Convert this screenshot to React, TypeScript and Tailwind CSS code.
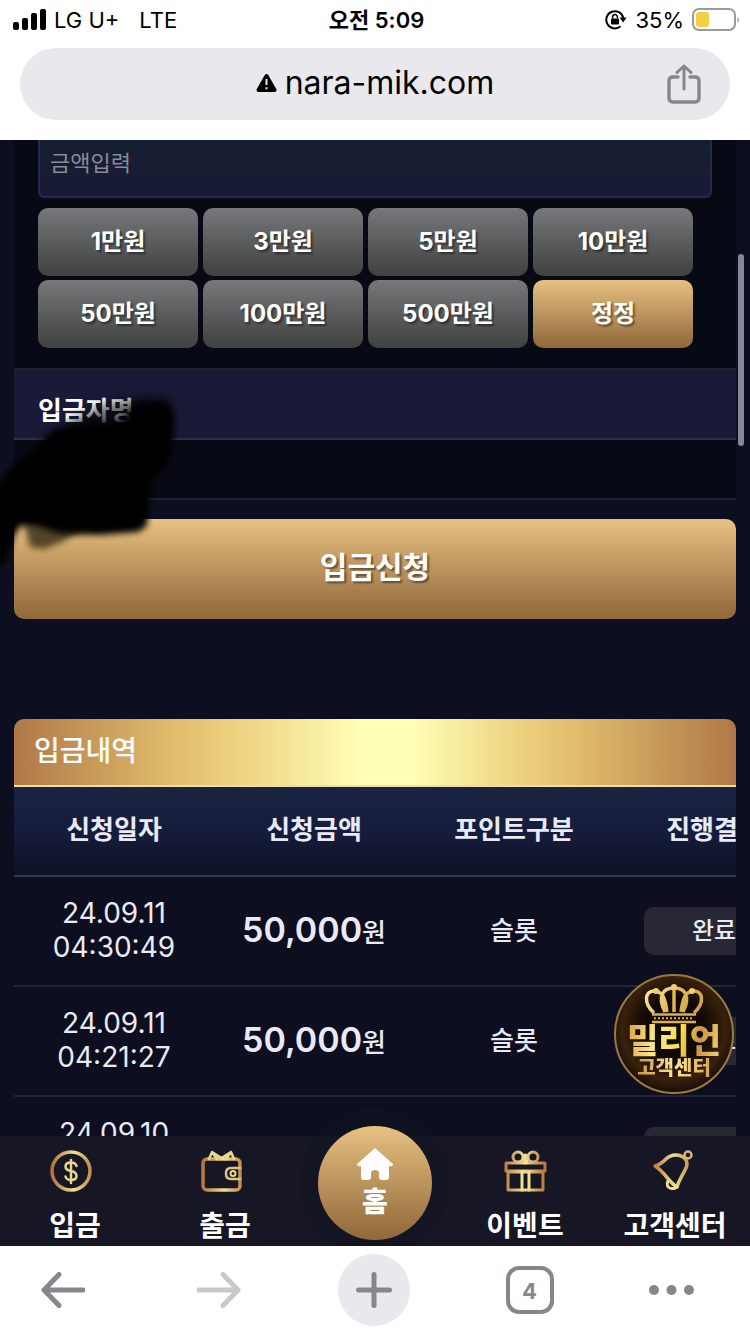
import { useState } from 'react';
import clsx from 'clsx';

interface Deposit {
  date: string;
  time: string;
  amount: string;
  kind: string;
  status: string;
}

const AMOUNTS = [1, 3, 5, 10, 50, 100, 500];

const DEPOSITS: Deposit[] = [
  { date: '24.09.11', time: '04:30:49', amount: '50,000', kind: '슬롯', status: '완료' },
  { date: '24.09.11', time: '04:21:27', amount: '50,000', kind: '슬롯', status: '완료' },
  { date: '24.09.10', time: '23:52:10', amount: '50,000', kind: '슬롯', status: '완료' },
];

const GOLD = 'bg-linear-to-b from-[#e8c182] to-[#90683a]';
const TEXT_SHADOW = '[text-shadow:2px_2px_2px_rgba(0,0,0,0.45)]';

function StatusBar() {
  return (
    <div className="grid grid-cols-[1fr_auto_1fr] items-center h-10 pl-[13px] pr-2.5 text-[22px] leading-10">
      <div className="flex items-center gap-2">
        <svg className="w-[33px] h-[22px]" viewBox="0 0 33 22" aria-hidden="true">
          <rect x="0" y="13" width="6" height="8" rx="2" />
          <rect x="9" y="9" width="6" height="12" rx="2" />
          <rect x="18" y="4" width="6" height="17" rx="2" />
          <rect x="27" y="0" width="6" height="21" rx="2" />
        </svg>
        <span>LG U+</span>
        <span className="ml-3">LTE</span>
      </div>
      <span className="font-semibold">오전 5:09</span>
      <div className="flex items-center justify-end gap-2">
        <svg className="w-[22px] h-[22px]" viewBox="0 0 22 22" aria-hidden="true">
          <path d="M15.5 17.3A8.6 8.6 0 1 1 18.3 9" fill="none" stroke="black" strokeWidth="2" />
          <path d="M14.6 8.6h7l-3.5 4.8z" />
          <rect x="6" y="9.4" width="8" height="6" rx="1" />
          <path d="M7.6 9.6V8a2.4 2.4 0 0 1 4.8 0v1.6" fill="none" stroke="black" strokeWidth="1.5" />
        </svg>
        <span>35%</span>
        <svg className="w-12 h-6" viewBox="0 0 48 24" aria-hidden="true">
          <rect x="1" y="1" width="42" height="21" rx="6" fill="none" stroke="#9a9a9a" strokeWidth="2" />
          <rect x="4" y="4" width="13" height="15" rx="3" fill="#f5ce45" />
          <path d="M45.5 8.5q3 3 0 6.500z" fill="#9a9a9a" />
        </svg>
      </div>
    </div>
  );
}

function AddressBar() {
  return (
    <div className="grid grid-cols-[1fr_auto_1fr] items-center h-[72px] mx-5 mt-2 mb-5 rounded-full bg-[#e8e8ed]">
      <button className="col-start-2 flex items-center gap-2 pb-0.5 text-[32px]">
        <svg className="w-[21px] h-5" viewBox="0 0 21 20" aria-hidden="true">
          <path d="M10.500 3 18.500 17h-16z" stroke="black" strokeWidth="4" strokeLinejoin="round" />
          <path d="M10.500 6v6M10.500 14.300v2" stroke="#e8e8ed" strokeWidth="2" />
        </svg>
        nara-mik.com
      </button>
      <button className="justify-self-end mr-[29px]" aria-label="공유">
        <svg
          className="w-[34px] h-10"
          viewBox="0 0 34 40"
          fill="none"
          stroke="#84878b"
          strokeWidth="3.400"
          strokeLinecap="round"
          strokeLinejoin="round"
        >
          <path d="M11 13H6q-4 0-4 4v17q0 4 4 4h22q4 0 4-4V17q0-4-4-4h-5" />
          <path d="M17 25V2M10 8.500 17 2l7 6.500" strokeWidth="3" />
        </svg>
      </button>
    </div>
  );
}

function DepositForm() {
  const [amount, setAmount] = useState('');

  return (
    <form onSubmit={e => e.preventDefault()}>
      <div className="bg-[#070914]">
        <div className="px-6 pb-5">
          <input
            value={amount}
            onChange={e => setAmount(e.target.value)}
            placeholder="금액입력"
            aria-label="금액입력"
            className="block w-full h-[70px] -mt-3 px-2.5 rounded-md border-2 border-[#252a4b] bg-linear-to-b from-[#141f30] to-[#1a1a36] text-[22px] text-white placeholder:text-[#888b98]"
          />
          <div className="grid grid-cols-4 gap-x-[5px] gap-y-1 mt-2.5 mr-[19px]">
            {AMOUNTS.map(value => (
              <button
                key={value}
                type="button"
                onClick={() => setAmount(String(value * 10000))}
                className={clsx(
                  'h-[68px] rounded-[10px] bg-linear-to-b from-[#77787b] to-[#404240] text-2xl font-bold text-white',
                  TEXT_SHADOW
                )}
              >
                {value}만원
              </button>
            ))}
            <button
              type="button"
              onClick={() => setAmount('')}
              className={clsx('h-[68px] rounded-[10px] text-2xl font-bold text-white', GOLD, TEXT_SHADOW)}
            >
              정정
            </button>
          </div>
        </div>
        <div className="flex items-center h-[72px] px-6 pt-3 border-y-2 border-t-[#20222f] border-b-[#2f3149] bg-[#191a38] text-[26px] font-bold text-white">
          입금자명
        </div>
        <div className="h-[60px] border-b-2 border-[#20222f]" />
      </div>
      <button
        type="submit"
        className={clsx('block w-full h-[100px] mt-[19px] pb-1 rounded-[10px] text-[30px] font-bold text-white', GOLD, TEXT_SHADOW)}
      >
        입금신청
      </button>
    </form>
  );
}

function DepositHistory() {
  return (
    <section className="mt-[100px] overflow-hidden rounded-t-[10px]">
      <h2 className="h-[68px] px-5 border-b-2 border-[#f3dda0] bg-[linear-gradient(90deg,#b07847,#e0bc6c_22%,#f0d787_33%,#ffffb5_48%,#ffffb5_55%,#f0d787_68%,#e0bc6c_78%,#b07847)] text-[28px] leading-[64px] font-medium text-white">
        입금내역
      </h2>
      <table className="w-full min-w-[800px] table-fixed border-separate border-spacing-0 text-center text-[#e9eaf6]">
        <thead>
          <tr className="bg-linear-to-b from-[#1b2342] via-[#161d3c] to-[#0c1023] text-[26px]">
            {['신청일자', '신청금액', '포인트구분', '진행결과'].map(name => (
              <th key={name} className="h-[90px] pb-1 border-b-2 border-[#343a4d] font-bold">
                {name}
              </th>
            ))}
          </tr>
        </thead>
        <tbody>
          {DEPOSITS.map(row => (
            <tr key={row.date + row.time}>
              <td className="h-[110px] pb-0.5 border-b-2 border-[#232536] text-[28px] leading-[34px]">
                {row.date}
                <br />
                {row.time}
              </td>
              <td className="pb-1 border-b-2 border-[#232536] text-[26px] font-medium">
                <span className="text-[34px] font-semibold">{row.amount}</span>원
              </td>
              <td className="pb-0.5 border-b-2 border-[#232536] text-[26px] font-medium">{row.kind}</td>
              <td className="border-b-2 border-[#232536]">
                <span className="block w-[140px] mx-auto rounded-[10px] bg-[#272833] text-2xl leading-[48px] font-medium">
                  {row.status}
                </span>
              </td>
            </tr>
          ))}
        </tbody>
      </table>
    </section>
  );
}

// Hand-drawn black marker over the depositor's name
function Marker() {
  return (
    <svg className="absolute left-0 top-[240px] w-[190px] h-[200px] pointer-events-none" viewBox="0 380 190 200" aria-hidden="true">
      <defs>
        <filter id="soft" x="-20%" y="-20%" width="140%" height="140%">
          <feGaussianBlur stdDeviation="3" />
        </filter>
        <filter id="softer" x="-20%" y="-40%" width="140%" height="180%">
          <feGaussianBlur stdDeviation="6" />
        </filter>
      </defs>
      <path d="M62 426 100 406 130 398h40l4 30-60 30H50z" filter="url(#softer)" opacity="0.6" />
      <path d="M25 525 30 547 44 549 62 542 84 528z" fill="#2a2010" filter="url(#soft)" opacity="0.75" />
      <path
        d="M-10 500 8 470 34 450 52 430 85 424 120 422 138 402 165 401 174 414 173 445 166 466 151 480 149 500 147 526 138 532 100 535 62 534 38 528 20 526 14 536 6 560-10 578z"
        filter="url(#soft)"
      />
    </svg>
  );
}

function SupportBadge() {
  return (
    <button
      className="absolute right-4 bottom-[152px] flex flex-col items-center w-[120px] h-[120px] pt-2 rounded-full border-2 border-[#9a7a3e] bg-[radial-gradient(circle_at_50%_45%,#100905_35%,#3a200d_60%,#180d07_75%,#5a3c18)]"
    >
      <svg className="w-[60px] h-10" viewBox="-1 0 60 40" fill="none" stroke="url(#crown)" strokeWidth="3.500" aria-hidden="true">
        <defs>
          <linearGradient id="crown" x1="0" y1="0" x2="58" y2="40" gradientUnits="userSpaceOnUse">
            <stop offset="0" stopColor="#fff1ae" />
            <stop offset="0.5" stopColor="#e2b552" />
            <stop offset="1" stopColor="#c99743" />
          </linearGradient>
        </defs>
        <path d="M9 29C-2 19 0 7 9 7c8 0 11 6 13 21M20 28C12 12 18 4 29 4s17 8 9 24M49 29C60 19 58 7 49 7c-8 0-11 6-13 21" />
        <path d="M29 4v24" stroke="#e2b552" />
        <g fill="#f2cf73" stroke="none">
          <circle cx="29" cy="3" r="3" />
          <circle cx="11" cy="7" r="3" />
          <circle cx="47" cy="7" r="3" />
        </g>
        <path d="M7 30.500h44M7 38h44" stroke="#dcae53" strokeWidth="2.500" />
        <path d="M9 34.300h40" stroke="#dcae53" strokeDasharray="2 2" strokeWidth="2" />
      </svg>
      <span className="bg-[linear-gradient(100deg,#d7a245,#ffe789_30%,#f7df4f_55%,#c99543_75%,#f4d477)] bg-clip-text text-[34px] leading-[34px] font-black text-transparent">
        밀리언
      </span>
      <span className="bg-linear-to-r from-[#c99743] via-[#ffe694] to-[#d8a751] bg-clip-text text-xl leading-5 font-black text-transparent">
        고객센터
      </span>
    </button>
  );
}

function NavIcon({ name }: { name: string }) {
  return (
    <svg
      className="w-[50px] h-11"
      viewBox="0 0 50 44"
      fill="none"
      stroke="url(#gold)"
      strokeWidth="3.500"
      strokeLinejoin="round"
      strokeLinecap="round"
      aria-hidden="true"
    >
      {name === 'coin' && (
        <>
          <circle cx="21" cy="21" r="19" />
          <path
            d="M26.500 16q-1-3.500-5.500-3.500-5.500 0-5.500 4 0 3.500 5.500 4.500t5.500 5q0 4-5.500 4-4.500 0-5.500-3.500M21 10v23"
            stroke="#e9d98f"
            strokeWidth="2.500"
          />
        </>
      )}
      {name === 'wallet' && (
        <>
          <rect x="3" y="9" width="37" height="31" rx="4" />
          <path d="M40 18h-9q-5 0-5 5v1q0 5 5 5h9" stroke="#dcc57c" strokeWidth="2.500" />
          <circle cx="33" cy="23.500" r="2.500" stroke="#e9d98f" strokeWidth="2" />
          <path d="M9 9 12 2l9.500 6L31 2l3 7M12 2l5 7M31 2l-5 7" stroke="#e9d98f" strokeWidth="2.500" />
        </>
      )}
      {name === 'gift' && (
        <>
          <path d="M6 13h39v8H6zM8 22h35v18H8z" strokeWidth="3" />
          <path d="M22 22v18M29 22v18" stroke="#efe08f" strokeWidth="3" />
          <path d="M25.500 12V6" stroke="#efe08f" strokeWidth="5" />
          <circle cx="18" cy="7" r="5" strokeWidth="3" />
          <circle cx="33" cy="7" r="5" strokeWidth="3" />
        </>
      )}
      {name === 'bell' && (
        <>
          <path d="M5 16C9 15 12 13 16 9c6-6 16-5 20 1 4 7-5 14-9 27C18 32 16 23 5 16z" />
          <path d="M18 31c-4 8 7 9 9 6" stroke="#efe08f" strokeWidth="3" />
          <circle cx="38" cy="5" r="3.500" stroke="#d8b76c" strokeWidth="2.500" />
        </>
      )}
    </svg>
  );
}

function SiteNav() {
  const item = 'flex flex-col items-center pt-3.5 text-[28px] leading-10 font-bold text-white whitespace-nowrap';

  return (
    <nav className="absolute inset-x-0 bottom-0 grid grid-cols-5 h-[110px] bg-[#171624]">
      <svg className="absolute w-0 h-0" aria-hidden="true">
        <defs>
          <linearGradient id="gold" x1="2" y1="0" x2="46" y2="0" gradientUnits="userSpaceOnUse">
            <stop offset="0" stopColor="#b5713e" />
            <stop offset="0.5" stopColor="#efe08f" />
            <stop offset="1" stopColor="#b5713e" />
          </linearGradient>
        </defs>
      </svg>
      <a href="#deposit" className={item}>
        <NavIcon name="coin" />
        <span className="mt-3">입금</span>
      </a>
      <a href="#withdraw" className={item}>
        <NavIcon name="wallet" />
        <span className="mt-3">출금</span>
      </a>
      <a
        href="#home"
        className={clsx(
          'justify-self-center flex flex-col items-center w-[114px] h-[114px] -mt-2.5 pt-5 rounded-full text-[28px] leading-10 font-black text-white shadow-[0_0_0_18px_#12131f80]',
          GOLD
        )}
      >
        <svg className="w-9 h-9" viewBox="0 0 36 36" fill="white" aria-hidden="true">
          <path d="M18 2 36 18q0 3-4 2v11q0 3-3 3h-4q-3 0-3-3v-4q0-3-4-3t-4 3v4q0 3-3 3H7q-3 0-3-3V20q-4 1-4-2z" />
        </svg>
        홈
      </a>
      <a href="#event" className={item}>
        <NavIcon name="gift" />
        <span className="mt-3">이벤트</span>
      </a>
      <a href="#support" className={item}>
        <NavIcon name="bell" />
        <span className="mt-3">고객센터</span>
      </a>
    </nav>
  );
}

function BrowserToolbar() {
  return (
    <footer className="flex shrink-0 items-center justify-between h-[88px] pl-[27px] pr-[53px] bg-white text-[#84878b]">
      <button className="flex justify-center w-[72px]" aria-label="뒤로">
        <svg className="w-11 h-9" viewBox="0 0 44 36" fill="none" stroke="currentColor" strokeWidth="5" strokeLinecap="round" strokeLinejoin="round">
          <path d="M42 18H3M18 2.500 3 18l15 15.500" />
        </svg>
      </button>
      <button className="flex justify-center w-[72px] text-[#c8c8ca]" aria-label="앞으로">
        <svg className="w-11 h-9" viewBox="0 0 44 36" fill="none" stroke="currentColor" strokeWidth="5" strokeLinecap="round" strokeLinejoin="round">
          <path d="M2 18h39M26 2.500 41 18 26 33.500" />
        </svg>
      </button>
      <button className="flex items-center justify-center w-[72px] h-[72px] rounded-full bg-[#e8e8ed]" aria-label="새 탭">
        <svg className="w-9 h-9" viewBox="0 0 36 36" stroke="currentColor" strokeWidth="5" strokeLinecap="round">
          <path d="M18 2.500v31M2.500 18h31" />
        </svg>
      </button>
      <button className="flex justify-center w-[72px]" aria-label="탭 4개">
        <span className="w-12 h-12 rounded-[13px] border-4 border-current text-[22px] leading-[42px] font-bold">4</span>
      </button>
      <button className="w-12" aria-label="더보기">
        <svg className="w-12 h-3" viewBox="0 0 48 12" fill="currentColor">
          <circle cx="5" cy="6" r="5" />
          <circle cx="22.500" cy="6" r="5" />
          <circle cx="40" cy="6" r="5" />
        </svg>
      </button>
    </footer>
  );
}

export default function App() {
  return (
    <div className="flex flex-col h-screen overflow-hidden bg-white text-black font-['Inter','Noto_Sans_CJK_KR',sans-serif]">
      <header className="shrink-0">
        <StatusBar />
        <AddressBar />
      </header>
      <main className="relative flex-1 overflow-hidden px-3.5 bg-[#0d0f20]">
        <DepositForm />
        <DepositHistory />
        <Marker />
        <div className="absolute right-1.5 top-[114px] w-1.5 h-48 rounded-full bg-[#85869a]" />
        <SupportBadge />
        <SiteNav />
      </main>
      <BrowserToolbar />
    </div>
  );
}
